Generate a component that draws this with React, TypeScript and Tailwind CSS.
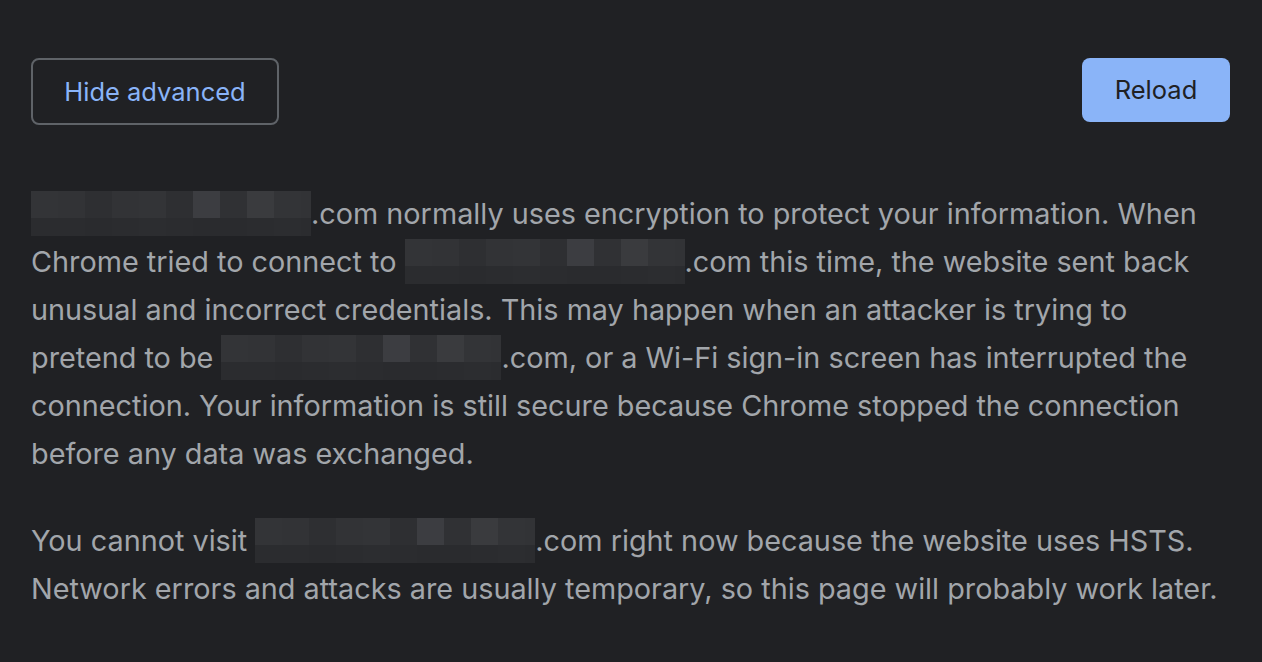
const cellColors = [
  ['#333437', '#323336', '#2e2f32', '#323336', '#333437', '#2e2f32', '#3c3d41', '#303134', '#3a3b3e', '#333437', '#323336'],
  ['#2b2c2f', '#2b2c2f', '#2a2b2e', '#2b2c2f', '#2c2d30', '#2b2c2f', '#2a2b2e', '#2a2b2e', '#2b2c2f', '#2c2d30', '#2b2c2f'],
];

const Redacted = () => (
  <span className="mt-px inline-flex flex-col w-[280px] h-[45px] align-top overflow-hidden">
    {cellColors.map((row, r) => (
      <span key={r} className={r === 0 ? 'flex h-[27px]' : 'flex h-[18px]'}>
        {row.map((c, i) => (
          <span
            key={i}
            className={i === row.length - 1 ? 'h-full w-[10px] shrink-0' : 'h-full w-[27px] shrink-0'}
            style={{ backgroundColor: c }}
          />
        ))}
      </span>
    ))}
  </span>
);

export default function App() {
  return (
    <div className="min-h-screen w-full bg-[#202124] pl-[31px] pr-[32px] pt-[58px] text-[28.8px] leading-[48px] text-[#a2a6ab] font-['Inter','Liberation_Sans',sans-serif]">
      <div className="flex items-start justify-between">
        <button className="h-[67px] w-[248px] rounded-[8px] border-2 border-[#5f6368] text-[25.5px] text-[#8ab4f8]">
          Hide advanced
        </button>
        <button className="h-[64px] w-[148px] rounded-[8px] bg-[#8ab4f8] text-[25.5px] text-[#202124]">
          Reload
        </button>
      </div>

      <p className="mt-[65px] whitespace-nowrap">
        <Redacted />.com normally uses encryption to protect your information. When
        <br />
        Chrome tried to connect to <Redacted />.com this time, the website sent back
        <br />
        unusual and incorrect credentials. This may happen when an attacker is trying to
        <br />
        pretend to be <Redacted />.com, or a Wi-Fi sign-in screen has interrupted the
        <br />
        connection. Your information is still secure because Chrome stopped the connection
        <br />
        before any data was exchanged.
      </p>

      <p className="mt-[39px] whitespace-nowrap">
        You cannot visit <Redacted />.com right now because the website uses HSTS.
        <br />
        Network errors and attacks are usually temporary, so this page will probably work later.
      </p>
    </div>
  );
}
